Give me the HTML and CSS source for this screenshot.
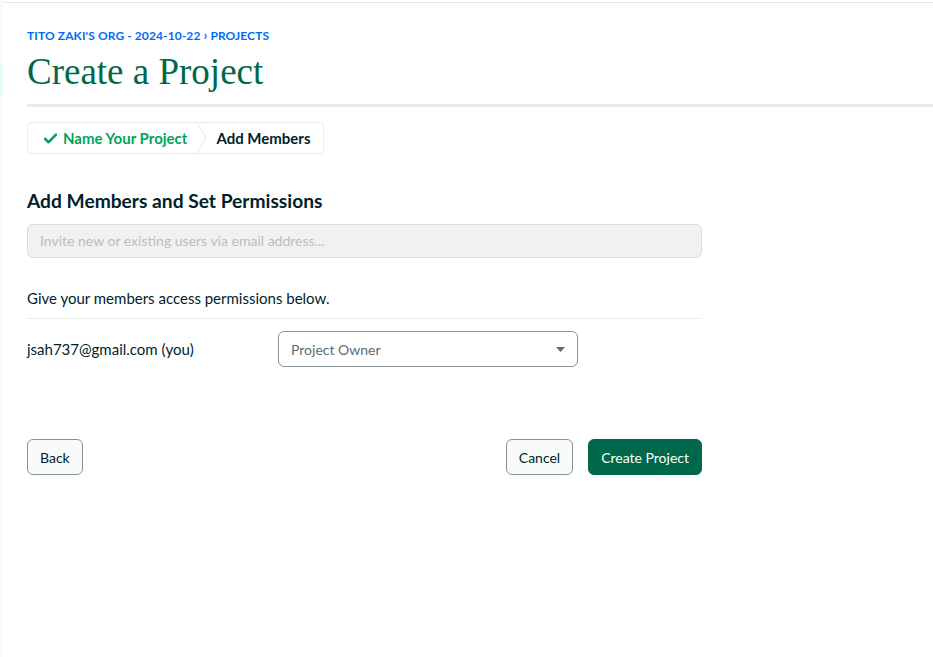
FILE: index.html
```html
<!DOCTYPE html>
<html lang="en">
<head>
<meta charset="utf-8">
<title>Create a Project</title>
<link rel="stylesheet" href="styles.css">
</head>
<body>
<div class="app">
  <aside class="rail">
    <div class="rail-active"></div>
  </aside>
  <div class="main">
    <div class="topbar"></div>
    <div class="page">
      <div class="crumbs">TITO ZAKI'S ORG - 2024-10-22 <span class="crumb-sep">›</span> PROJECTS</div>
      <h1 class="title">Create a Project</h1>
      <div class="title-rule"></div>

      <div class="stepper">
        <div class="step step-done">
          <svg class="check" width="13" height="11" viewBox="0 0 13 11" aria-hidden="true">
            <path d="M1 5.8 L4.6 9.2 L12 1.6" fill="none" stroke="#00a35c" stroke-width="2.6" stroke-linecap="round" stroke-linejoin="round"/>
          </svg>
          <span>Name Your Project</span>
        </div>
        <svg class="chev" width="11" height="32" viewBox="0 0 11 32" aria-hidden="true">
          <path d="M0.5 0 L10 16 L0.5 32" fill="none" stroke="#e4e8e6" stroke-width="1"/>
        </svg>
        <div class="step step-current">Add Members</div>
      </div>

      <section class="form">
        <h2 class="section-title">Add Members and Set Permissions</h2>
        <div class="invite">Invite new or existing users via email address...</div>
        <p class="hint">Give your members access permissions below.</p>
        <div class="member-row">
          <div class="member-email">jsah737@gmail.com (you)</div>
          <div class="select">
            <span>Project Owner</span>
            <svg width="9" height="5" viewBox="0 0 9 5" aria-hidden="true"><path d="M0 0 H9 L4.5 5 Z" fill="#5c6c75"/></svg>
          </div>
        </div>
        <div class="actions">
          <button class="btn">Back</button>
          <div class="actions-right">
            <button class="btn">Cancel</button>
            <button class="btn btn-primary">Create Project</button>
          </div>
        </div>
      </section>
    </div>
  </div>
</div>
</body>
</html>
```

FILE: styles.css
```css
* { box-sizing: border-box; }
html, body { margin: 0; padding: 0; background: #ffffff; }
body {
  font-family: Lato, "Open Sans", Arial, sans-serif;
  color: #001e2b;
  width: 933px;
  height: 657px;
  overflow: hidden;
}
.app { display: flex; height: 657px; }
.rail {
  width: 3px;
  flex: none;
  background: #f9fbfa;
  padding-top: 63px;
}
.rail-active { height: 32px; background: #e3fcf7; }
.main { flex: 1; min-width: 0; }
.topbar { height: 3px; border-bottom: 1px solid #e8e8e8; }
.page { padding: 24px 0 0 24px; }
.crumbs {
  font-size: 12px;
  line-height: 16px;
  font-weight: 700;
  color: #016bf8;
  letter-spacing: 0.1px;
}
.crumb-sep { font-size: 13px; }
.title {
  margin: 6px 0 0;
  font-family: "Liberation Serif", "Times New Roman", serif;
  font-weight: 400;
  font-size: 37px;
  line-height: 44px;
  color: #00684a;
}
.title-rule {
  margin-top: 10px;
  height: 3px;
  background: #e8edeb;
}
.stepper {
  margin-top: 15px;
  display: inline-flex;
  align-items: center;
  height: 32px;
  border: 1px solid #e8edeb;
  border-radius: 4px;
  background: #fff;
}
.step {
  display: flex;
  align-items: center;
  font-size: 15px;
  font-weight: 700;
  line-height: 20px;
}
.step-done { color: #00a35c; padding: 0 9px 0 16px; gap: 6px; }
.step-current { color: #001e2b; padding: 0 12px 0 9px; }
.chev { display: block; flex: none; }
.form { width: 675px; }
.section-title {
  margin: 35px 0 0;
  font-size: 19.2px;
  line-height: 24px;
  font-weight: 700;
}
.invite {
  margin-top: 11px;
  height: 34px;
  border: 1px solid #dcdcdc;
  border-radius: 6px;
  background: #f1f1f1;
  color: #bdbdbd;
  font-size: 14px;
  line-height: 32px;
  padding: 0 12px;
}
.hint {
  margin: 30px 0 0;
  font-size: 15px;
  line-height: 20px;
  padding-bottom: 10px;
  border-bottom: 1px solid #e8edeb;
}
.member-row {
  margin-top: 12px;
  display: flex;
  align-items: center;
}
.member-email { width: 251px; font-size: 15px; line-height: 20px; }
.select {
  width: 300px;
  height: 36px;
  border: 1px solid #889397;
  border-radius: 6px;
  display: flex;
  align-items: center;
  justify-content: space-between;
  padding: 0 12px 0 12px;
  color: #5c6c75;
  font-size: 14px;
}
.actions {
  margin-top: 72px;
  display: flex;
  justify-content: space-between;
}
.actions-right { display: flex; gap: 15px; }
.btn {
  height: 36px;
  padding: 0 12px;
  border: 1px solid #889397;
  border-radius: 6px;
  background: #f9fbfa;
  color: #001e2b;
  font-family: Lato, "Open Sans", Arial, sans-serif;
  font-size: 14px;
  font-weight: 400;
}
.btn-primary {
  background: #00684a;
  border-color: #00684a;
  color: #ffffff;
}
```
